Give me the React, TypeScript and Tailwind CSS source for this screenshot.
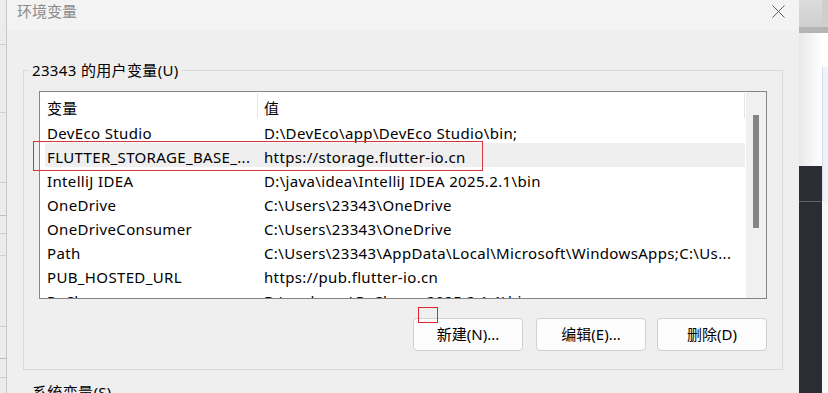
const rows = [
  ["DevEco Studio", "D:\\DevEco\\app\\DevEco Studio\\bin;"],
  ["FLUTTER_STORAGE_BASE_...", "https://storage.flutter-io.cn"],
  ["IntelliJ IDEA", "D:\\java\\idea\\IntelliJ IDEA 2025.2.1\\bin"],
  ["OneDrive", "C:\\Users\\23343\\OneDrive"],
  ["OneDriveConsumer", "C:\\Users\\23343\\OneDrive"],
  ["Path", "C:\\Users\\23343\\AppData\\Local\\Microsoft\\WindowsApps;C:\\Us..."],
  ["PUB_HOSTED_URL", "https://pub.flutter-io.cn"],
  ["PyCharm", "D:\\pycharm\\PyCharm 2025.2.1.1\\bin"],
];

export default function App() {
  return (
    <div className="w-[828px] h-[393px] overflow-hidden flex bg-[#efefef] font-['Noto_Sans','Noto_Sans_CJK_SC',sans-serif] text-black tracking-[0.35px]">
      {/* window behind, left */}
      <div className="w-[7px] shrink-0 flex flex-col border-r border-[#c8c8c8] bg-[#ececec]">
        <div className="h-[45px] border-b border-[#d0d0d0]" />
        <div className="h-[68px] border-b border-[#d0d0d0]" />
        <div className="h-[70px] border-b border-[#d0d0d0]" />
        <div className="h-[33px] border-b border-[#bdbdbd]" />
        <div className="h-[18px] border-b border-[#d0d0d0]" />
        <div className="h-[22px] border-b border-[#d0d0d0]" />
        <div className="h-[71px] border-b border-[#d0d0d0]" />
        <div className="h-[32px] border-b border-[#bdbdbd]" />
        <div className="h-[19px] border-b border-[#d0d0d0]" />
      </div>

      {/* dialog */}
      <div className="w-[792px] shrink-0 flex flex-col">
        <div className="h-[30px] shrink-0 bg-[#f3f3f3] flex items-start justify-between pl-[10px] pr-[14px]">
          <span className="text-[15px] leading-[22px] text-[#8a8a8a] tracking-normal">环境变量</span>
          <svg width="13" height="13" viewBox="0 0 13 13" className="mt-[5px]">
            <path d="M0.5 0.5 L12.5 12.5 M12.5 0.5 L0.5 12.5" stroke="#5f5f5f" strokeWidth="1" />
          </svg>
        </div>

        <div className="relative flex-1 px-[16px] pt-[30px]">
          <fieldset className="border border-[#dadada] p-0">
            <legend className="ml-[5px] px-[3px] text-[15px] leading-[20px]">23343 的用户变量(U)</legend>

            <div className="px-[15px] pb-[18px] pt-[11px]">
              {/* list */}
              <div className="h-[208px] border border-[#858585] bg-white flex overflow-hidden">
                <div className="flex-1 flex flex-col text-[15px] leading-[24px]">
                  <div className="h-[27px] shrink-0 flex items-center">
                    <div className="w-[218px] h-[25px] flex items-center pl-[7px] pt-[4px] border-r border-[#e5e5e5]">变量</div>
                    <div className="flex-1 h-[25px] flex items-center pl-[6px] pt-[4px] border-r border-[#e5e5e5]">值</div>
                  </div>
                  {rows.map(([k, v], i) => (
                    <div
                      key={k}
                      className={
                        "h-[24px] shrink-0 flex ml-[5px] whitespace-nowrap " +
                        (i === 1 ? "bg-[#efefef]" : "")
                      }
                    >
                      <div className="w-[213px] shrink-0 pl-[2px] pt-[2px]">{k}</div>
                      <div className="flex-1 pl-[6px] pt-[2px] overflow-hidden">{v}</div>
                    </div>
                  ))}
                </div>
                {/* scrollbar */}
                <div className="w-[21px] shrink-0 bg-[#f0f0f0] flex justify-center pt-[23px] border-l border-white">
                  <div className="w-[6px] h-[113px] bg-[#858585]" />
                </div>
              </div>

              <div className="flex justify-end mt-[19px] text-[15px] tracking-normal">
                <button className="w-[110px] h-[33px] rounded-[4px] border border-[#d0d0d0] bg-[#fdfdfd]">新建(N)...</button>
                <button className="w-[110px] h-[33px] ml-[13px] rounded-[4px] border border-[#d0d0d0] bg-[#fdfdfd]">编辑(E)...</button>
                <button className="w-[110px] h-[33px] ml-[11px] rounded-[4px] border border-[#d0d0d0] bg-[#fdfdfd]">删除(D)</button>
              </div>
            </div>
          </fieldset>

          <div className="pl-[9px] pt-[12px] text-[15px] leading-[20px]">系统变量(S)</div>

          {/* annotations */}
          <div className="absolute left-[26px] top-[111px] w-[450px] h-[30px] border-[1.5px] border-[#d9343b]" />
          <div className="absolute left-[411px] top-[277px] w-[20px] h-[16px] border border-[#e0262d]" />
        </div>
      </div>

      {/* windows behind, right */}
      <div className="w-[23px] shrink-0 flex flex-col">
        <div className="h-[27px] bg-gradient-to-b from-[#dcdcdc] to-[#cfcfcf]" />
        <div className="h-[6px] bg-[#b4b4b4]" />
        <div className="h-[133px] bg-gradient-to-r from-[#e8e8e8] to-white" />
        <div className="flex-1 bg-[#2a2d34] flex flex-col">
          <div className="h-[36px] border-b border-[#5d6066]" />
        </div>
      </div>
      <div className="w-[6px] shrink-0 flex flex-col">
        <div className="h-[27px] bg-[#cfcfcf]" />
        <div className="h-[6px] bg-[#b4b4b4]" />
        <div className="h-[34px] bg-white" />
        <div className="h-[135px] bg-[#edf2fc] border-l border-[#d8dce4]" />
        <div className="flex-1 bg-[#f7f7f7]" />
      </div>
    </div>
  );
}
